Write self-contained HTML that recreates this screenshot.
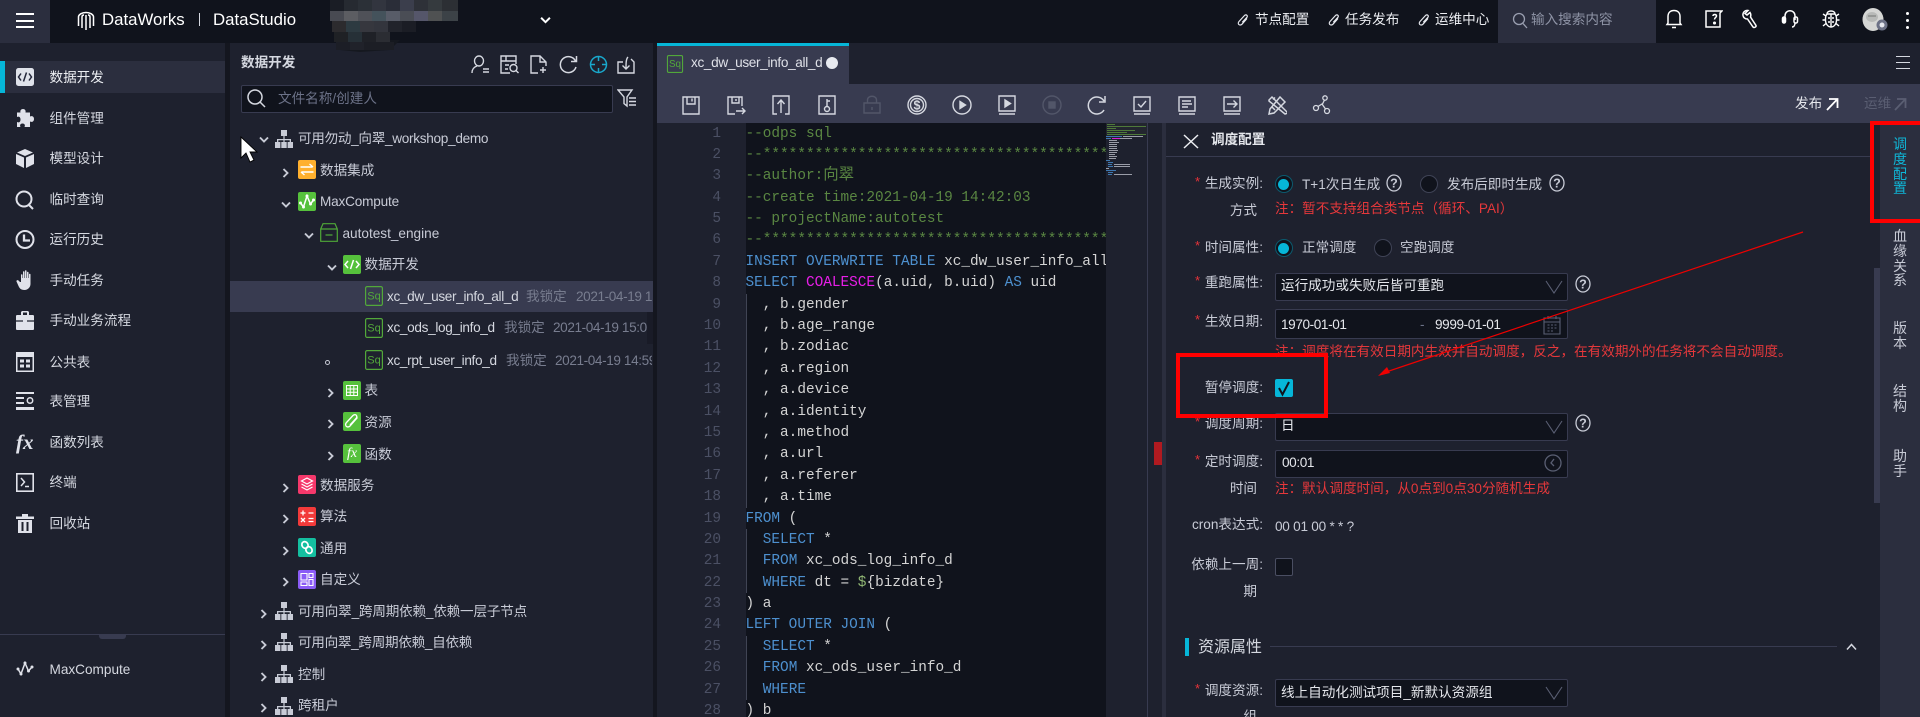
<!DOCTYPE html>
<html lang="zh"><head><meta charset="utf-8"><title>DataStudio</title>
<style>
html,body{margin:0;padding:0;width:1920px;height:717px;overflow:hidden;background:#1e212e}
body{position:relative;font-family:"Liberation Sans","Noto Sans CJK SC",sans-serif;font-size:13.6px;color:#c8cbd6}
.b{position:absolute}
.t{position:absolute;white-space:nowrap;line-height:20px;margin-top:-10px}
.r{margin-top:-9px}
.x{letter-spacing:-.33px}
.y{letter-spacing:-.4px}
.l{position:absolute;white-space:nowrap;line-height:20px;margin-top:-10px;left:1100px;width:163px;text-align:right;color:#c8cbd6}
.l2{width:157px}
.s{position:absolute;left:1195px;color:#e8333a;font-size:13px;line-height:14px;margin-top:-9px}
.n{position:absolute;white-space:nowrap;line-height:20px;margin-top:-10px;left:1275px;color:#e5383b}
.sb{position:absolute;left:1275px;width:291px;height:26px;background:#10131c;border:1px solid #383b50;border-radius:2px}
.i{position:absolute;fill:none;stroke:#d5d8e0;stroke-width:1.4}
.d{color:#787d8f}
.m{color:#d5d8e0;left:49.5px;margin-top:-9px}
.vt{position:absolute;left:1892px;width:16px;font-size:14px;line-height:14.8px;text-align:center;color:#c8cbd6}
#code{position:absolute;left:745.5px;top:123.5px;width:360px;height:594px;overflow:hidden;font-family:"Liberation Mono","Noto Sans CJK SC",monospace;font-size:14.4px;line-height:21.39px;color:#d4d4d4;white-space:pre}
#nums{position:absolute;left:680px;width:41px;top:123.5px;font-family:"Liberation Mono",monospace;font-size:14.4px;line-height:21.39px;color:#4b5064;text-align:right;white-space:pre}
.c{color:#5a8742}.k{color:#4d90cf}.f{color:#e81ee8}.v{color:#8fb573}
.cj{font-family:"Noto Sans CJK SC",sans-serif;font-size:15.4px;line-height:1px}
</style></head><body>
<svg width="0" height="0" style="position:absolute"><defs>
<symbol id="org" viewBox="0 0 18 18"><path fill="#c8cbd6" d="M6 0h6v6H6zM8.400 6h1.200v3H8.400zM2 9h14v1.300H2zM2 10h1.300v2H2zM8.400 10h1.200v2H8.400zM14.700 10H16v2h-1.300zM0 12h5.400v6H0zM6.300 12h5.400v6H6.300zM12.600 12H18v6h-5.400z"/></symbol>
<symbol id="cd" viewBox="0 0 10 8"><path d="M1 1.500l4 4 4-4" fill="none" stroke="#c8cbd6" stroke-width="1.900"/></symbol>
<symbol id="cr" viewBox="0 0 8 10"><path d="M1.500 1l4 4-4 4" fill="none" stroke="#c8cbd6" stroke-width="1.900"/></symbol>
<symbol id="sq" viewBox="0 0 18 20"><rect x=".6" y=".6" width="16.800" height="18.800" rx="1.500" fill="none" stroke="#52a83a" stroke-width="1.200"/><text x="9" y="13.500" font-family="Liberation Sans" font-size="11" fill="#52a83a" text-anchor="middle">Sq</text></symbol>
<symbol id="q" viewBox="0 0 16 18"><ellipse cx="8" cy="9" rx="7" ry="8" fill="none" stroke="#c8cbd6" stroke-width="1.300"/><text x="8" y="13.500" font-family="Liberation Sans" font-size="12.500" font-weight="bold" fill="#c8cbd6" text-anchor="middle">?</text></symbol>
<symbol id="v" viewBox="0 0 18 14"><path d="M1 1l8 12 8-12" fill="none" stroke="#5a5f73" stroke-width="1.100"/></symbol>
<symbol id="clip" viewBox="0 0 12 14"><path d="M10 5.500L5 11.200c-1 1.100-2.500 1-3.200.3s-.7-2 .2-3l5.500-6c.7-.8 1.800-.8 2.400-.2s.6 1.500-.2 2.300L5.300 9.300" fill="none" stroke="#e8eaf0" stroke-width="1.200"/></symbol>
</defs></svg>

<!-- backgrounds -->
<div class="b" style="left:0;top:0;width:1920px;height:43px;background:#10131c"></div>
<div class="b" style="left:0;top:0;width:50px;height:43px;background:#2b2e3e"></div>
<div class="b" style="left:0;top:43px;width:225px;height:674px;background:#1e212e"></div>
<div class="b" style="left:225px;top:43px;width:5px;height:674px;background:#14161f"></div>
<div class="b" style="left:653px;top:43px;width:4px;height:674px;background:#14161f"></div>
<div class="b" style="left:647px;top:312px;width:6px;height:32px;background:#191b27"></div>

<!-- topbar -->
<div class="b" style="left:16px;top:13px;width:18px;height:2px;background:#fff"></div>
<div class="b" style="left:16px;top:19.500px;width:18px;height:2px;background:#fff"></div>
<div class="b" style="left:16px;top:26px;width:18px;height:2px;background:#fff"></div>
<svg class="b" style="left:77px;top:11px" width="18" height="20" viewBox="0 0 18 20"><path d="M1.500 15V6C1.500 3.500 5 1.500 9 1.500S16.500 3.500 16.500 6v9M5 17V6c0-1.500 1-2 2-2M9 19V4M13 17V6c0-1.500-1-2-2-2" fill="none" stroke="#fff" stroke-width="1.500"/></svg>
<div class="t" style="left:102px;top:20px;font-size:16.8px;color:#fff">DataWorks</div>
<div class="b" style="left:199px;top:13px;width:1px;height:13px;background:#d5d8e0"></div>
<div class="t" style="left:213px;top:20px;font-size:16.8px;color:#fff">DataStudio</div>
<svg class="b" style="left:330px;top:0" width="130" height="54" viewBox="0 0 130 54">
<path fill="#15181f" d="M10 40h60l-10 10-30 2-20-2z"/>
<g shape-rendering="crispEdges">
<rect x="0" y="0" width="14" height="11" fill="#1a1d25"/><rect x="14" y="0" width="14" height="11" fill="#262a31"/><rect x="28" y="0" width="14" height="11" fill="#2b3037"/><rect x="42" y="0" width="14" height="11" fill="#32353f"/><rect x="56" y="0" width="14" height="11" fill="#2a2d38"/><rect x="70" y="0" width="14" height="11" fill="#3b3e4c"/><rect x="84" y="0" width="14" height="11" fill="#2e3138"/><rect x="98" y="0" width="14" height="11" fill="#353a3e"/><rect x="112" y="0" width="16" height="11" fill="#2c2f34"/>
<rect x="0" y="11" width="14" height="10" fill="#484a52"/><rect x="14" y="11" width="14" height="10" fill="#5c5d62"/><rect x="28" y="11" width="14" height="10" fill="#4f5158"/><rect x="42" y="11" width="14" height="10" fill="#44525b"/><rect x="56" y="11" width="14" height="10" fill="#585c68"/><rect x="70" y="11" width="14" height="10" fill="#4a4d55"/><rect x="84" y="11" width="14" height="10" fill="#55566a"/><rect x="98" y="11" width="14" height="10" fill="#4f5152"/><rect x="112" y="11" width="16" height="10" fill="#3c4247"/>
<rect x="2" y="21" width="14" height="11" fill="#2c2b2e"/><rect x="16" y="21" width="14" height="11" fill="#2d3a41"/><rect x="30" y="21" width="14" height="11" fill="#36373e"/><rect x="44" y="21" width="14" height="11" fill="#33353d"/><rect x="58" y="21" width="14" height="11" fill="#21232b"/><rect x="72" y="21" width="14" height="11" fill="#1b1d25"/>
<rect x="4" y="32" width="14" height="10" fill="#1f2125"/><rect x="18" y="32" width="14" height="10" fill="#263037"/><rect x="32" y="32" width="14" height="10" fill="#1f2127"/><rect x="46" y="32" width="14" height="10" fill="#2b2d33"/>
<rect x="6" y="42" width="14" height="8" fill="#1c1e26"/><rect x="20" y="42" width="14" height="8" fill="#20222a"/><rect x="34" y="42" width="30" height="8" fill="#1c1e25"/>
</g></svg>
<svg class="b" style="left:540px;top:16px" width="11" height="9" viewBox="0 0 10 8"><path d="M1 1.500l4 4 4-4" fill="none" stroke="#fff" stroke-width="1.800"/></svg>

<svg class="b" style="left:1237px;top:13px" width="12" height="14"><use href="#clip"/></svg>
<div class="t" style="left:1255px;top:20px;color:#eceef2">节点配置</div>
<svg class="b" style="left:1328px;top:13px" width="12" height="14"><use href="#clip"/></svg>
<div class="t" style="left:1345px;top:20px;color:#eceef2">任务发布</div>
<svg class="b" style="left:1418px;top:13px" width="12" height="14"><use href="#clip"/></svg>
<div class="t" style="left:1435px;top:20px;color:#eceef2">运维中心</div>
<div class="b" style="left:1498px;top:0;width:158px;height:43px;background:#2b2e3e"></div>
<svg class="i" style="left:1512px;top:12px;stroke:#9a9fb0;stroke-width:1.300" width="16" height="17" viewBox="0 0 16 17"><circle cx="7" cy="7" r="5.500"/><path d="M11 11.500l4 4.500"/></svg>
<div class="t" style="left:1531px;top:20px;color:#8f94a6">输入搜索内容</div>
<svg class="i" style="left:1665px;top:9px;stroke:#fff;stroke-width:1.500" width="18" height="20" viewBox="0 0 18 20"><path d="M2 15.500h14L15 14V7.500C15 3.500 12.500 1.500 9 1.500S3 3.500 3 7.500V14zM7 18.500h4"/></svg>
<svg class="i" style="left:1704px;top:9px;stroke:#fff;stroke-width:1.500" width="19" height="20" viewBox="0 0 19 20"><path d="M2 2h16l-2 2v14H2zM9 7c0-2 3.500-2 3.500 0 0 1.500-2 1.500-2 3.500" /><circle cx="10.500" cy="14" r=".8" fill="#fff"/></svg>
<svg class="i" style="left:1741px;top:9px;stroke:#fff;stroke-width:1.500" width="18" height="20" viewBox="0 0 18 20"><path d="M7 1.500C4 1 1.500 3.500 2 6.500c.4 2 2 3.500 4.500 3.500L12 18c1 1.200 3.500 0 3-1.500L9.500 8C10 6.500 10 5 9 3.500L6 6 4 4.500z"/></svg>
<svg class="i" style="left:1781px;top:9px;stroke:#fff;stroke-width:1.500" width="18" height="20" viewBox="0 0 18 20"><path d="M4 11V7c0-7 10-7 10 0v4M11 18c2 0 3-2 3-4"/><rect x="1.500" y="8" width="3" height="6" rx="1.500" fill="#fff"/><rect x="13" y="8" width="3.500" height="6" rx="1.500"/></svg>
<svg class="i" style="left:1822px;top:9px;stroke:#fff;stroke-width:1.400" width="18" height="20" viewBox="0 0 18 20"><path d="M5 5c0-4 8-4 8 0zM5 5h8c1.500 2 1.500 3 1.500 6 0 4-2.500 7-5.500 7s-5.500-3-5.500-7c0-3 0-4 1.500-6zM9 5v13M1 5l3 2M17 5l-3 2M.5 11h3M14.500 11h3M1 17l3-2.500M17 17l-3-2.500M6 9h2M10 9h2M6 13h2M10 13h2"/></svg>
<svg class="b" style="left:1862px;top:8px" width="26" height="24" viewBox="0 0 26 24"><ellipse cx="11" cy="11.500" rx="10.500" ry="11.500" fill="#d5d6d4"/><ellipse cx="10" cy="9" rx="6" ry="5" fill="#b8bab8"/><path d="M6 8h8" stroke="#8a8c8a" stroke-width="1.500"/><circle cx="20" cy="17" r="5.500" fill="#6c7186"/><circle cx="20" cy="17" r="2.500" fill="#e5e7ee"/></svg>
<div class="b" style="left:1906px;top:12px;width:3px;height:3px;background:#fff;border-radius:2px"></div>
<div class="b" style="left:1906px;top:19px;width:3px;height:3px;background:#fff;border-radius:2px"></div>
<div class="b" style="left:1906px;top:26px;width:3px;height:3px;background:#fff;border-radius:2px"></div>

<!-- left menu -->
<div class="b" style="left:0;top:61px;width:225px;height:32px;background:#2b2e3e"></div>
<div class="b" style="left:0;top:61px;width:5px;height:32px;background:#06b6d8"></div>
<svg class="b" style="left:16px;top:68px" width="18" height="18" viewBox="0 0 18 18"><rect width="18" height="18" rx="2.500" fill="#dfe2ea"/><path d="M5 5.500L2.500 9 5 12.500M13 5.500L15.500 9 13 12.500M10.500 4.500L7.500 13.500" fill="none" stroke="#23263a" stroke-width="1.500"/></svg>
<div class="t m" style="top:77px;color:#eceef2">数据开发</div>
<svg class="b" style="left:16px;top:109px" width="18" height="18" viewBox="0 0 18 18"><path fill="#e0e2ea" d="M7 0c2 0 3 1.500 2.500 3.500H14v4c2-1 4 0 4 2.500s-2 3.500-4 2.500V18H8.500c1-2 0-3.500-2-3.500S3.500 16 4.500 18H1v-5c2 1 3.500 0 3.500-2.500S3 7 1 8V3.500h3.500C4 1.500 5 0 7 0z"/></svg>
<div class="t m" style="top:118px">组件管理</div>
<svg class="b" style="left:16px;top:149px" width="18" height="19" viewBox="0 0 18 19"><path fill="#e0e2ea" d="M9 0l8 3.500L9 7 1 3.500zM0 5l8 3.500V19L0 15zM18 5l-8 3.500V19l8-4z"/></svg>
<div class="t m" style="top:158px">模型设计</div>
<svg class="i" style="left:15px;top:190px;stroke:#e0e2ea;stroke-width:2" width="20" height="20" viewBox="0 0 20 20"><ellipse cx="9" cy="9" rx="7.500" ry="7.500"/><path d="M13 14l5 5"/></svg>
<div class="t m" style="top:199px">临时查询</div>
<svg class="i" style="left:15px;top:230px;stroke:#e0e2ea;stroke-width:2" width="20" height="19" viewBox="0 0 20 19"><ellipse cx="10" cy="9.500" rx="8.500" ry="8.500"/><path d="M9 4.500V10.500H15" stroke-width="2.300"/></svg>
<div class="t m" style="top:239px">运行历史</div>
<svg class="b" style="left:16px;top:270px" width="18" height="20" viewBox="0 0 18 20"><path fill="#e0e2ea" d="M5 5c0-1 1.500-1 1.500 0v3H7V2c0-1 1.500-1 1.500 0v6H9V1c0-1 1.500-1 1.500 0v7h.5V2.500c0-1 1.500-1 1.500 0V8h.5V4.500c0-1 1.500-1 1.500 0V14c0 3-2.500 6-6 6-4 0-5-2-6-4L.5 11.500c-.5-1 1-2 2-1L4 12h1z"/></svg>
<div class="t m" style="top:280px">手动任务</div>
<svg class="b" style="left:16px;top:311px" width="18" height="19" viewBox="0 0 18 19"><path fill="#e0e2ea" d="M6 0h6l1 1v3h4c.5 0 1 .5 1 1v4H0V5c0-.5.5-1 1-1h4V1zM7 1.500V4h4V1.500zM0 11h18v7c0 .5-.5 1-1 1H1c-.5 0-1-.5-1-1zM0 9h18v2H0z"/><path d="M0 10h7M11 10h7" stroke="#1e212e" stroke-width="1.200"/></svg>
<div class="t m" style="top:320px">手动业务流程</div>
<svg class="b" style="left:16px;top:352px" width="18" height="20" viewBox="0 0 18 20"><path fill="#e0e2ea" d="M0 0h18v20H0z"/><path fill="#1e212e" d="M1.500 5h15v13.500h-15z"/><path fill="#e0e2ea" d="M4 7.500h4v3H4zM10 7.500h4v3h-4zM4 12.500h4v3H4zM10 12.500h4v3h-4z"/></svg>
<div class="t m" style="top:362px">公共表</div>
<svg class="b" style="left:16px;top:392px" width="18" height="18" viewBox="0 0 18 18"><path fill="#e0e2ea" d="M0 0h18v2H0zM0 5h8v2H0zM0 10h8v2H0zM0 15h18v3H0z"/><circle cx="14" cy="8.500" r="2.700" fill="none" stroke="#e0e2ea" stroke-width="1.500"/></svg>
<div class="t m" style="top:401px">表管理</div>
<div class="t" style="left:16px;top:442px;font:italic bold 21px/20px 'Liberation Serif',serif;color:#e0e2ea">fx</div>
<div class="t m" style="top:442px">函数列表</div>
<svg class="b" style="left:16px;top:473px" width="18" height="19" viewBox="0 0 18 19"><rect x=".8" y=".8" width="16.400" height="17.400" fill="none" stroke="#e0e2ea" stroke-width="1.600"/><path d="M5 5l3.500 4L5 13M9 13.500h4" fill="none" stroke="#e0e2ea" stroke-width="1.500"/></svg>
<div class="t m" style="top:482px">终端</div>
<svg class="b" style="left:16px;top:514px" width="18" height="19" viewBox="0 0 18 19"><path fill="#e0e2ea" d="M0 2.500h6V0h6v2.500h6V5H0zM2 6h14v13H2z"/><path fill="#1e212e" d="M5.500 8h2v9h-2zM10.500 8h2v9h-2z"/></svg>
<div class="t m" style="top:523px">回收站</div>
<div class="b" style="left:0;top:634px;width:225px;height:1px;background:#383b50"></div>
<div class="b" style="left:99px;top:635px;width:27px;height:4px;background:#383b50;border-radius:0 0 3px 3px"></div>
<svg class="b" style="left:16px;top:660px" width="18" height="18" viewBox="0 0 18 18"><path d="M2 9l3 5L9 3l3.500 8L16 7" fill="none" stroke="#e0e2ea" stroke-width="1.500"/><g fill="#e0e2ea"><circle cx="2" cy="9" r="1.500"/><circle cx="5" cy="14" r="1.500"/><circle cx="9" cy="3" r="1.500"/><circle cx="12.500" cy="11" r="1.500"/><circle cx="16" cy="7" r="1.500"/></g></svg>
<div class="t m" style="top:669px">MaxCompute</div>

<!-- tree header -->
<div class="t r" style="left:241px;top:62px;font-weight:bold;color:#d5d8e0">数据开发</div>
<svg class="i" style="left:471px;top:55px" width="19" height="19" viewBox="0 0 19 19"><ellipse cx="8" cy="6" rx="4.500" ry="5"/><path d="M1 18c0-4 2-6 5-7M12 14h6M12 17h6"/></svg>
<svg class="i" style="left:500px;top:55px" width="19" height="19" viewBox="0 0 19 19"><path d="M10 18H1V1h15v8M1 6h15M6 1v5M5 10h4M5 14h3"/><circle cx="13.500" cy="13" r="3.500"/><path d="M16 15.500l2.500 2.500"/></svg>
<svg class="i" style="left:530px;top:55px" width="18" height="19" viewBox="0 0 18 19"><path d="M8 18H1V1h9l6 6v4M10 1v6h6M13 12v6M10 15h6"/></svg>
<svg class="i" style="left:559px;top:55px;stroke-width:1.500" width="19" height="19" viewBox="0 0 19 19"><path d="M16.500 6A8 8 0 1 0 17 12M17.500 1v5.500H12"/></svg>
<svg class="i" style="left:589px;top:55px;stroke:#19a8cc;stroke-width:1.500" width="19" height="19" viewBox="0 0 19 19"><ellipse cx="9.500" cy="9.500" rx="8" ry="8"/><path d="M9.500 1v5M9.500 13v5M1 9.500h5M13 9.500h5"/></svg>
<svg class="i" style="left:617px;top:55px" width="18" height="19" viewBox="0 0 18 19"><path d="M6 7H1v11h16V7l-3-3M11 2C9 4 9 8 9 14M5.500 10.500L9 14l3.500-3.500"/></svg>
<div class="b" style="left:241px;top:85px;width:370px;height:26px;background:#10131c;border:1px solid #383b50;border-radius:2px"></div>
<svg class="i" style="left:246px;top:88px;stroke:#d5d8e0;stroke-width:1.500" width="20" height="20" viewBox="0 0 20 20"><ellipse cx="9" cy="9" rx="7" ry="7"/><path d="M14 14l5 5"/></svg>
<div class="t r" style="left:278px;top:98px;color:#6c7288">文件名称/创建人</div>
<svg class="i" style="left:617px;top:89px" width="20" height="19" viewBox="0 0 20 19"><path d="M1 1h14L10 8v9l-3-2.500V8zM12 9h7M12 12.500h7M12 16h7"/></svg>

<!-- tree -->
<svg class="b" style="left:259px;top:136px" width="10" height="8"><use href="#cd"/></svg>
<svg class="b" style="left:275px;top:130px" width="18" height="18"><use href="#org"/></svg>
<div class="t r" style="left:298px;top:138px;letter-spacing:-.3px">可用勿动_向翠_workshop_demo</div>

<svg class="b" style="left:282px;top:168px" width="8" height="10"><use href="#cr"/></svg>
<svg class="b" style="left:298px;top:160px" width="18" height="19" viewBox="0 0 18 19"><rect width="18" height="19" rx="2" fill="#ffb02e"/><path d="M2.500 7h12M11.500 4l3.500 3M15.500 12h-12M6.500 15L3 12" fill="none" stroke="#fff" stroke-width="1.400"/></svg>
<div class="t r" style="left:320px;top:170px">数据集成</div>

<svg class="b" style="left:281px;top:201px" width="10" height="8"><use href="#cd"/></svg>
<svg class="b" style="left:298px;top:192px" width="18" height="19" viewBox="0 0 18 19"><rect width="18" height="19" rx="2" fill="#56c13c"/><path d="M2.500 11l3 4L9 4l3.500 8L15.500 8" fill="none" stroke="#fff" stroke-width="1.500"/><g fill="#fff"><circle cx="2.500" cy="11" r="1.500"/><circle cx="5.500" cy="15" r="1.500"/><circle cx="9" cy="4" r="1.500"/><circle cx="12.500" cy="12" r="1.500"/><circle cx="15.500" cy="8" r="1.500"/></g></svg>
<div class="t r" style="left:320px;top:201px;letter-spacing:-.18px">MaxCompute</div>

<svg class="b" style="left:304px;top:232px" width="10" height="8"><use href="#cd"/></svg>
<svg class="b" style="left:320px;top:223px" width="18" height="19" viewBox="0 0 18 19"><path d="M.7 18.300V6L3 .7h12L17.300 6v12.300zM.7 6h16.600M5.500 12h7" fill="none" stroke="#4fa838" stroke-width="1.200"/></svg>
<div class="t r" style="left:342.500px;top:233px">autotest_engine</div>

<svg class="b" style="left:327px;top:264px" width="10" height="8"><use href="#cd"/></svg>
<svg class="b" style="left:343px;top:255px" width="18" height="19" viewBox="0 0 18 19"><rect width="18" height="19" rx="2" fill="#56c13c"/><path d="M5 6L2 9.500 5 13M13 6l3 3.500L13 13M10.500 5l-3 9" fill="none" stroke="#fff" stroke-width="1.500"/></svg>
<div class="t r" style="left:364.500px;top:264px">数据开发</div>

<div class="b" style="left:230px;top:281px;width:423px;height:31px;background:#383b50"></div>
<svg class="b" style="left:365px;top:286px" width="18" height="20"><use href="#sq"/></svg>
<div class="t r x" style="left:387px;top:296px;color:#d5d8e0">xc_dw_user_info_all_d</div>
<div class="t r d" style="left:526px;top:296px">我锁定</div>
<div class="b y" style="left:576px;top:287px;width:76px;height:20px;overflow:hidden"><div class="d" style="line-height:20px;white-space:nowrap">2021-04-19 14:42</div></div>

<svg class="b" style="left:365px;top:318px" width="18" height="20"><use href="#sq"/></svg>
<div class="t r x" style="left:387px;top:327px;color:#d5d8e0">xc_ods_log_info_d</div>
<div class="t r d" style="left:504px;top:327px">我锁定</div>
<div class="b y" style="left:553px;top:318px;width:94px;height:20px;overflow:hidden"><div class="d" style="line-height:20px;white-space:nowrap">2021-04-19 15:02</div></div>

<div class="b" style="left:325px;top:360px;width:3px;height:3px;border:1px solid #c8cbd6;border-radius:50%"></div>
<svg class="b" style="left:365px;top:350px" width="18" height="20"><use href="#sq"/></svg>
<div class="t r x" style="left:387px;top:360px;color:#d5d8e0">xc_rpt_user_info_d</div>
<div class="t r d" style="left:506px;top:360px">我锁定</div>
<div class="b y" style="left:555px;top:351px;width:97px;height:20px;overflow:hidden"><div class="d" style="line-height:20px;white-space:nowrap">2021-04-19 14:59</div></div>

<svg class="b" style="left:327px;top:388px" width="8" height="10"><use href="#cr"/></svg>
<svg class="b" style="left:343px;top:381px" width="18" height="19" viewBox="0 0 18 19"><rect width="18" height="19" rx="2" fill="#56c13c"/><path d="M3.500 4.500h11v10h-11zM3.500 8h11M3.500 11.300h11M7.200 4.500v10M10.800 4.500v10" fill="none" stroke="#fff" stroke-width="1"/></svg>
<div class="t r" style="left:364.500px;top:390px">表</div>

<svg class="b" style="left:327px;top:419px" width="8" height="10"><use href="#cr"/></svg>
<svg class="b" style="left:343px;top:412px" width="18" height="19" viewBox="0 0 18 19"><rect width="18" height="19" rx="2" fill="#56c13c"/><path d="M14.500 5.500L7 14c-1.500 1.500-3.500 1-4 0s-.5-2.500.5-3.500L10 3.500c1.200-1.200 3-1 3.500 0s.3 2.200-.5 3L7 13" fill="none" stroke="#fff" stroke-width="1.300"/></svg>
<div class="t r" style="left:364.500px;top:422px">资源</div>

<svg class="b" style="left:327px;top:451px" width="8" height="10"><use href="#cr"/></svg>
<div class="b" style="left:343px;top:444px;width:18px;height:19px;background:#56c13c;border-radius:2px;color:#fff;font:italic 14px/19px 'Liberation Serif',serif;text-align:center">fx</div>
<div class="t r" style="left:364.500px;top:454px">函数</div>

<svg class="b" style="left:282px;top:483px" width="8" height="10"><use href="#cr"/></svg>
<svg class="b" style="left:298px;top:475px" width="18" height="19" viewBox="0 0 18 19"><rect width="18" height="19" rx="2" fill="#f5386b"/><path d="M9 3l5.500 3L9 9 3.500 6zM3.500 9L9 12l5.500-3M3.500 12L9 15l5.500-3" fill="none" stroke="#fff" stroke-width="1.200"/></svg>
<div class="t r" style="left:320px;top:485px">数据服务</div>

<svg class="b" style="left:282px;top:514px" width="8" height="10"><use href="#cr"/></svg>
<svg class="b" style="left:298px;top:507px" width="18" height="19" viewBox="0 0 18 19"><rect width="18" height="19" rx="2" fill="#f23a3a"/><path d="M2.500 6h5M5 3.500v5M10.500 6h5M3 11l4 4M7 11l-4 4M10.500 11.500h5M10.500 14.500h5" fill="none" stroke="#fff" stroke-width="1.300"/></svg>
<div class="t r" style="left:320px;top:516px">算法</div>

<svg class="b" style="left:282px;top:546px" width="8" height="10"><use href="#cr"/></svg>
<svg class="b" style="left:298px;top:538px" width="18" height="19" viewBox="0 0 18 19"><rect width="18" height="19" rx="2" fill="#14bfa0"/><ellipse cx="7" cy="7" rx="3" ry="3.500" fill="none" stroke="#fff" stroke-width="1.700" transform="rotate(-30 7 7)"/><ellipse cx="11" cy="12" rx="3" ry="3.500" fill="none" stroke="#fff" stroke-width="1.700" transform="rotate(-30 11 12)"/></svg>
<div class="t r" style="left:320px;top:548px">通用</div>

<svg class="b" style="left:282px;top:577px" width="8" height="10"><use href="#cr"/></svg>
<svg class="b" style="left:298px;top:570px" width="18" height="19" viewBox="0 0 18 19"><rect width="18" height="19" rx="2" fill="#8b5cf6"/><path d="M3 3.500h6v6.500H3zM11 3.500h4v4h-4zM3 12h6v3.500H3zM11 9.500h4v6h-4z" fill="none" stroke="#fff" stroke-width="1.100"/></svg>
<div class="t r" style="left:320px;top:579px">自定义</div>

<svg class="b" style="left:260px;top:609px" width="8" height="10"><use href="#cr"/></svg>
<svg class="b" style="left:275px;top:602px" width="18" height="18"><use href="#org"/></svg>
<div class="t r" style="left:298px;top:611px;letter-spacing:-.2px">可用向翠_跨周期依赖_依赖一层子节点</div>

<svg class="b" style="left:260px;top:640px" width="8" height="10"><use href="#cr"/></svg>
<svg class="b" style="left:275px;top:633px" width="18" height="18"><use href="#org"/></svg>
<div class="t r" style="left:298px;top:642px;letter-spacing:-.3px">可用向翠_跨周期依赖_自依赖</div>

<svg class="b" style="left:260px;top:672px" width="8" height="10"><use href="#cr"/></svg>
<svg class="b" style="left:275px;top:665px" width="18" height="18"><use href="#org"/></svg>
<div class="t r" style="left:298px;top:674px">控制</div>

<svg class="b" style="left:260px;top:703px" width="8" height="10"><use href="#cr"/></svg>
<svg class="b" style="left:275px;top:697px" width="18" height="18"><use href="#org"/></svg>
<div class="t r" style="left:298px;top:705px">跨租户</div>

<!-- main tabs -->
<div class="b" style="left:657px;top:43px;width:1263px;height:41px;background:#1e212e"></div>
<div class="b" style="left:657px;top:43px;width:192px;height:41px;background:#383b50"></div>
<div class="b" style="left:657px;top:43px;width:192px;height:3px;background:#06b6d8"></div>
<svg class="b" style="left:666px;top:55px" width="18" height="18"><use href="#sq"/></svg>
<div class="t x" style="left:691px;top:63px;color:#dfe1e8">xc_dw_user_info_all_d</div>
<div class="b" style="left:826px;top:57px;width:12px;height:12px;border-radius:50%;background:#e8eaf0"></div>
<div class="b" style="left:1896px;top:56px;width:14px;height:1px;background:#d5d8e0"></div>
<div class="b" style="left:1896px;top:62px;width:14px;height:1px;background:#d5d8e0"></div>
<div class="b" style="left:1896px;top:68px;width:14px;height:1px;background:#d5d8e0"></div>

<!-- toolbar -->
<div class="b" style="left:657px;top:84px;width:1263px;height:39px;background:#383b50"></div>
<svg class="i" style="left:681px;top:95px" width="20" height="20" viewBox="0 0 20 20"><path d="M2 2h16v17H2zM6 2v7h8V2M11 3.500v3"/></svg>
<svg class="i" style="left:726px;top:95px" width="20" height="20" viewBox="0 0 20 20"><path d="M9 19H2V2h14v9M6 2v6h7V2M10 4v2M10 16h9M16 13l3 3-3 3"/></svg>
<svg class="i" style="left:771px;top:95px" width="20" height="20" viewBox="0 0 20 20"><path d="M6 19H2V1h16v18h-4M10 18V5M6.500 9L10 5l3.500 4"/></svg>
<svg class="i" style="left:817px;top:95px" width="20" height="20" viewBox="0 0 20 20"><path d="M2 1h16v18H2z"/><circle cx="10" cy="14" r="2.500"/><path d="M10 11.500V4M10 6h3"/></svg>
<svg class="i" style="left:862px;top:95px;stroke:#525669" width="20" height="20" viewBox="0 0 20 20"><path d="M2 8h16v10H2zM5.500 8V5c0-5 9-5 9 0v3M10 12v3"/></svg>
<svg class="i" style="left:907px;top:95px" width="20" height="20" viewBox="0 0 20 20"><circle cx="10" cy="10" r="9"/><circle cx="10" cy="10" r="6.500"/><text x="10" y="14.500" font-family="Liberation Sans" font-size="12.500" font-weight="bold" fill="#d5d8e0" stroke="none" text-anchor="middle">$</text></svg>
<svg class="i" style="left:952px;top:95px" width="20" height="20" viewBox="0 0 20 20"><circle cx="10" cy="10" r="9"/><path d="M8 6.500l5.500 3.500L8 13.500z" fill="#d5d8e0"/></svg>
<svg class="i" style="left:997px;top:95px" width="20" height="20" viewBox="0 0 20 20"><path d="M2 1h16v15H2zM2 19h16"/><path d="M8 5l5.500 3.500L8 12z" fill="#d5d8e0"/></svg>
<svg class="i" style="left:1042px;top:95px;stroke:#525669" width="20" height="20" viewBox="0 0 20 20"><circle cx="10" cy="10" r="9"/><rect x="7" y="7" width="6" height="6" fill="#525669"/></svg>
<svg class="i" style="left:1087px;top:95px;stroke-width:1.500" width="20" height="20" viewBox="0 0 20 20"><path d="M17 6A8.500 8.500 0 1 0 17 15M18 1v6h-6"/></svg>
<svg class="i" style="left:1132px;top:95px" width="20" height="20" viewBox="0 0 20 20"><path d="M2 2h16v14H2zM2 19h16M6 9l3 3 5-6"/></svg>
<svg class="i" style="left:1177px;top:95px" width="20" height="20" viewBox="0 0 20 20"><path d="M2 2h16v14H2zM2 19h16M5 6h9M5 9h10M5 12h6"/></svg>
<svg class="i" style="left:1222px;top:95px" width="20" height="20" viewBox="0 0 20 20"><path d="M2 2h16v14H2zM2 19h16M5 9h10M11.500 5.500L15 9l-3.500 3.500"/></svg>
<svg class="i" style="left:1267px;top:95px;stroke-width:1.500" width="20" height="20" viewBox="0 0 20 20"><path d="M2 5l3-3 16 16-3 1L2 6zM13 2l5 5L7 18l-5 1 1-5zM5 12l3 3M6 4.500l2-2"/></svg>
<svg class="i" style="left:1312px;top:95px;stroke-width:1.300" width="20" height="20" viewBox="0 0 20 20"><circle cx="13" cy="3" r="2.200"/><circle cx="4" cy="13" r="2.500"/><circle cx="15" cy="16" r="2.500"/><path d="M12.500 5l-2 4M6 11.500l4-2.500 3.500 5"/></svg>
<div class="t" style="left:1795px;top:104px;color:#e5e7ec">发布</div>
<svg class="i" style="left:1826px;top:97px;stroke:#fff;stroke-width:1.800" width="13" height="14" viewBox="0 0 13 14"><path d="M1 13L11.500 2M3 2h8.500v9"/></svg>
<div class="t" style="left:1864px;top:104px;color:#5a5e72">运维</div>
<svg class="i" style="left:1894px;top:97px;stroke:#5a5e72;stroke-width:1.800" width="13" height="14" viewBox="0 0 13 14"><path d="M1 13L11.500 2M3 2h8.500v9"/></svg>

<!-- editor -->
<div class="b" style="left:657px;top:123px;width:88.500px;height:594px;background:#1e212e"></div>
<div class="b" style="left:745.500px;top:123px;width:360px;height:594px;background:#10131c"></div>
<div id="nums">1
2
3
4
5
6
7
8
9
10
11
12
13
14
15
16
17
18
19
20
21
22
23
24
25
26
27
28</div>
<div id="code"><span class="c">--odps sql</span>
<span class="c">--*************************************************</span>
<span class="c">--author:<span class="cj">向翠</span></span>
<span class="c">--create time:2021-04-19 14:42:03</span>
<span class="c">-- projectName:autotest</span>
<span class="c">--*************************************************</span>
<span class="k">INSERT OVERWRITE TABLE</span> xc_dw_user_info_all_d
<span class="k">SELECT</span> <span class="f">COALESCE</span>(a.uid, b.uid) <span class="k">AS</span> uid
  , b.gender
  , b.age_range
  , b.zodiac
  , a.region
  , a.device
  , a.identity
  , a.method
  , a.url
  , a.referer
  , a.time
<span class="k">FROM</span> (
  <span class="k">SELECT</span> *
  <span class="k">FROM</span> xc_ods_log_info_d
  <span class="k">WHERE</span> dt = <span class="v">$</span>{bizdate}
) a
<span class="k">LEFT OUTER JOIN</span> (
  <span class="k">SELECT</span> *
  <span class="k">FROM</span> xc_ods_user_info_d
  <span class="k">WHERE</span>
) b</div>
<div class="b" style="left:745.500px;top:294px;width:1px;height:214px;background:#404454"></div>
<div class="b" style="left:745.500px;top:529px;width:1px;height:64px;background:#404454"></div>
<div class="b" style="left:745.500px;top:636px;width:1px;height:64px;background:#404454"></div>

<!-- minimap -->
<div class="b" style="left:1105.500px;top:123px;width:41px;height:594px;background:#1e212e"></div>
<div class="b" style="left:1105.500px;top:123px;width:41px;height:11px;background:#23262f"></div>
<svg class="b" style="left:1106px;top:124px" width="40" height="60" viewBox="0 0 40 60" shape-rendering="crispEdges">
<g fill="#4f7a3a"><rect x="1" y="0" width="8" height="1"/><rect x="1" y="2" width="39" height="1"/><rect x="1" y="4" width="9" height="1"/><rect x="1" y="6" width="28" height="1"/><rect x="1" y="8" width="20" height="1"/><rect x="1" y="10" width="39" height="1"/></g>
<g fill="#3f78b0"><rect x="0" y="12" width="16" height="1"/><rect x="0" y="14" width="5" height="1"/><rect x="0" y="36" width="4" height="1"/><rect x="2" y="38" width="5" height="1"/><rect x="2" y="40" width="4" height="1"/><rect x="2" y="42" width="5" height="1"/><rect x="0" y="46" width="10" height="1"/><rect x="2" y="48" width="5" height="1"/><rect x="2" y="50" width="4" height="1"/></g>
<g fill="#9a9da8"><rect x="17" y="12" width="20" height="1"/><rect x="6" y="14" width="20" height="1"/><rect x="3" y="16" width="8" height="1"/><rect x="3" y="18" width="10" height="1"/><rect x="3" y="20" width="8" height="1"/><rect x="3" y="22" width="8" height="1"/><rect x="3" y="24" width="8" height="1"/><rect x="3" y="26" width="9" height="1"/><rect x="3" y="28" width="8" height="1"/><rect x="3" y="30" width="6" height="1"/><rect x="3" y="32" width="8" height="1"/><rect x="3" y="34" width="7" height="1"/><rect x="8" y="40" width="16" height="1"/><rect x="8" y="42" width="16" height="1"/><rect x="0" y="44" width="3" height="1"/><rect x="8" y="50" width="18" height="1"/></g>
<rect x="6" y="14" width="8" height="1" fill="#d81ed8"/></svg>
<div class="b" style="left:1146.500px;top:123px;width:1px;height:594px;background:#383b50"></div>
<div class="b" style="left:1154px;top:442px;width:8px;height:23px;background:#b01a20"></div>
<div class="b" style="left:1162px;top:123px;width:4px;height:594px;background:#2b2e3e"></div>

<!-- panel -->
<div class="b" style="left:1166px;top:123px;width:714px;height:594px;background:#1e212e"></div>
<div class="b" style="left:1166px;top:156px;width:708px;height:1px;background:#383b50"></div>
<svg class="i" style="left:1183px;top:134px;stroke:#eceef2;stroke-width:1.500" width="16" height="15" viewBox="0 0 16 15"><path d="M1 1l14 13M15 1L1 14"/></svg>
<div class="t" style="left:1211px;top:140px;color:#e5e7ec;font-weight:bold;font-size:13.600px">调度配置</div>
<div class="b" style="left:1874px;top:268px;width:6px;height:235px;background:#383b50"></div>

<span class="s" style="top:184px">*</span><div class="l" style="top:184px">生成实例:</div>
<div class="b" style="left:1274.500px;top:175px;width:18px;height:18px;box-sizing:border-box;border:1px solid #0b5a6e;border-radius:50%;background:#10131c"></div><div class="b" style="left:1278px;top:178.500px;width:11px;height:11px;border-radius:50%;background:#06b6d8"></div>
<div class="t" style="left:1302px;top:185px">T+1次日生成</div>
<svg class="b" style="left:1386px;top:174px" width="16" height="18"><use href="#q"/></svg>
<div class="b" style="left:1420px;top:175px;width:18px;height:18px;box-sizing:border-box;border:1px solid #3f4356;border-radius:50%;background:#10131c"></div>
<div class="t" style="left:1447px;top:185px">发布后即时生成</div>
<svg class="b" style="left:1549px;top:174px" width="16" height="18"><use href="#q"/></svg>
<div class="l l2" style="top:211px">方式</div>
<div class="n" style="top:209px">注：暂不支持组合类节点（循环、PAI）</div>

<span class="s" style="top:248px">*</span><div class="l" style="top:248px">时间属性:</div>
<div class="b" style="left:1274.500px;top:239px;width:18px;height:18px;box-sizing:border-box;border:1px solid #0b5a6e;border-radius:50%;background:#10131c"></div><div class="b" style="left:1278px;top:242.500px;width:11px;height:11px;border-radius:50%;background:#06b6d8"></div>
<div class="t" style="left:1302px;top:248px">正常调度</div>
<div class="b" style="left:1374px;top:239px;width:18px;height:18px;box-sizing:border-box;border:1px solid #3f4356;border-radius:50%;background:#10131c"></div>
<div class="t" style="left:1400px;top:248px">空跑调度</div>

<span class="s" style="top:283px">*</span><div class="l" style="top:283px">重跑属性:</div>
<div class="sb" style="top:273px"></div>
<div class="t" style="left:1281px;top:286px;color:#e5e7ec">运行成功或失败后皆可重跑</div>
<svg class="b" style="left:1545px;top:280px" width="18" height="14"><use href="#v"/></svg>
<svg class="b" style="left:1575px;top:275px" width="16" height="18"><use href="#q"/></svg>

<span class="s" style="top:322px">*</span><div class="l" style="top:322px">生效日期:</div>
<div class="sb" style="top:309px;height:28px"></div>
<div class="t y" style="left:1281px;top:325px;color:#e5e7ec">1970-01-01</div>
<div class="t" style="left:1420px;top:325px;color:#6c7288">-</div>
<div class="t y" style="left:1435px;top:325px;color:#e5e7ec">9999-01-01</div>
<svg class="i" style="left:1543px;top:315px;stroke:#5a5f73;stroke-width:1.100" width="18" height="20" viewBox="0 0 18 20"><path d="M1 3h16v16H1zM1 7h16M5 1v3M13 1v3M4.500 10h2M8 10h2M11.500 10h2M4.500 13h2M8 13h2M11.500 13h2M4.500 16h2M8 16h2"/></svg>
<div class="n" style="top:352px">注：调度将在有效日期内生效并自动调度，反之，在有效期外的任务将不会自动调度。</div>

<div class="l" style="top:388px">暂停调度:</div>
<div class="b" style="left:1275px;top:379px;width:18px;height:18px;background:#06b6d8;border-radius:2px"></div>
<svg class="b" style="left:1275px;top:379px" width="18" height="18" viewBox="0 0 18 18"><path d="M4 9l3.500 6.500L14 3" fill="none" stroke="#10131c" stroke-width="2"/></svg>

<span class="s" style="top:424px">*</span><div class="l" style="top:424px">调度周期:</div>
<div class="sb" style="top:413px"></div>
<div class="t" style="left:1281px;top:426px;color:#e5e7ec">日</div>
<svg class="b" style="left:1545px;top:420px" width="18" height="14"><use href="#v"/></svg>
<svg class="b" style="left:1575px;top:414px" width="16" height="18"><use href="#q"/></svg>

<span class="s" style="top:462px">*</span><div class="l" style="top:462px">定时调度:</div>
<div class="sb" style="top:450px"></div>
<div class="t y" style="left:1282px;top:463px;color:#e5e7ec">00:01</div>
<svg class="i" style="left:1544px;top:454px;stroke:#5a5f73;stroke-width:1.300" width="18" height="18" viewBox="0 0 18 18"><ellipse cx="9" cy="9" rx="8" ry="8"/><path d="M10 5L7 9l3 3"/></svg>
<div class="l l2" style="top:489px">时间</div>
<div class="n" style="top:489px">注：默认调度时间，从0点到0点30分随机生成</div>

<div class="l" style="top:525px">cron表达式:</div>
<div class="t" style="left:1275px;top:527px;letter-spacing:-.25px">00 01 00 * * ?</div>

<div class="l" style="top:565px">依赖上一周:</div>
<div class="b" style="left:1275px;top:558px;width:16px;height:16px;background:#10131c;border:1px solid #4a4e62;border-radius:2px"></div>
<div class="l l2" style="top:592px">期</div>

<div class="b" style="left:1185px;top:638px;width:4px;height:18px;background:#06b6d8"></div>
<div class="t" style="left:1198px;top:648px;font-size:16px;color:#d5d8e0">资源属性</div>
<div class="b" style="left:1270px;top:646px;width:567px;height:1px;background:#383b50"></div>
<svg class="i" style="left:1846px;top:643px;stroke:#d5d8e0;stroke-width:1.500" width="11" height="8" viewBox="0 0 11 8"><path d="M1 6.500l4.500-5 4.500 5"/></svg>

<span class="s" style="top:691px">*</span><div class="l" style="top:691px">调度资源:</div>
<div class="sb" style="top:679px"></div>
<div class="t" style="left:1281px;top:693px;color:#e5e7ec">线上自动化测试项目_新默认资源组</div>
<svg class="b" style="left:1545px;top:686px" width="18" height="14"><use href="#v"/></svg>
<div class="l l2" style="top:717px">组</div>

<!-- right rail -->
<div class="b" style="left:1880px;top:123px;width:40px;height:594px;background:#2b2e3e"></div>
<div class="vt" style="top:137px;color:#0fb5d6">调<br>度<br>配<br>置</div>
<div class="vt" style="top:229px">血<br>缘<br>关<br>系</div>
<div class="vt" style="top:321px">版<br>本</div>
<div class="vt" style="top:384px">结<br>构</div>
<div class="vt" style="top:449px">助<br>手</div>

<!-- annotations -->
<div class="b" style="left:1870px;top:121px;width:46px;height:94px;border:4px solid #f00"></div>
<div class="b" style="left:1176px;top:353px;width:144px;height:57px;border:4px solid #f00"></div>
<svg class="b" style="left:1360px;top:220px" width="460" height="170" viewBox="1360 220 460 170"><path d="M1803 232L1386 372" fill="none" stroke="#e00" stroke-width="1.200"/><path d="M1378 376l12-3-3-6z" fill="#e00"/></svg>

<!-- cursor -->
<svg class="b" style="left:238px;top:135px" width="22" height="30" viewBox="238 135 22 30"><path d="M241 137v21l5-5 4 9 4-2-4-8h7z" fill="#fff" stroke="#000" stroke-width=".9"/></svg>
</body></html>
